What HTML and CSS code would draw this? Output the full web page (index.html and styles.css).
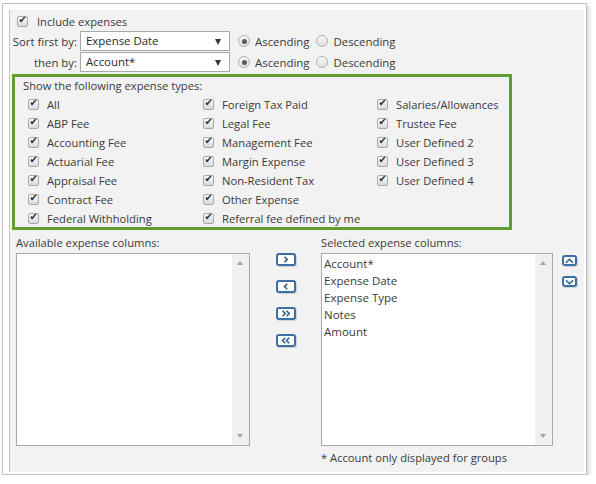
FILE: index.html
```html
<!doctype html>
<html>

<head>
  <title>Expense options</title>
  <link rel="stylesheet" href="styles.css">
</head>

<body>
  <div class="frame">
    <div class="panel">
      <label class="check include"><span class="cb"></span>Include expenses</label>

      <div class="sort-row">
        <span class="sort-label">Sort first by:</span>
        <div class="select">Expense Date<span class="arrow"></span></div>
        <label class="radio radio--on"><span class="dot"></span>Ascending</label>
        <label class="radio"><span class="dot"></span>Descending</label>
      </div>
      <div class="sort-row">
        <span class="sort-label">then by:</span>
        <div class="select">Account*<span class="arrow"></span></div>
        <label class="radio radio--on"><span class="dot"></span>Ascending</label>
        <label class="radio"><span class="dot"></span>Descending</label>
      </div>

      <section class="types">
        <h2>Show the following expense types:</h2>
        <div class="types-grid">
          <div class="col">
            <label class="check"><span class="cb"></span>All</label>
            <label class="check"><span class="cb"></span>ABP Fee</label>
            <label class="check"><span class="cb"></span>Accounting Fee</label>
            <label class="check"><span class="cb"></span>Actuarial Fee</label>
            <label class="check"><span class="cb"></span>Appraisal Fee</label>
            <label class="check"><span class="cb"></span>Contract Fee</label>
            <label class="check"><span class="cb"></span>Federal Withholding</label>
          </div>
          <div class="col">
            <label class="check"><span class="cb"></span>Foreign Tax Paid</label>
            <label class="check"><span class="cb"></span>Legal Fee</label>
            <label class="check"><span class="cb"></span>Management Fee</label>
            <label class="check"><span class="cb"></span>Margin Expense</label>
            <label class="check"><span class="cb"></span>Non-Resident Tax</label>
            <label class="check"><span class="cb"></span>Other Expense</label>
            <label class="check"><span class="cb"></span>Referral fee defined by me</label>
          </div>
          <div class="col">
            <label class="check"><span class="cb"></span>Salaries/Allowances</label>
            <label class="check"><span class="cb"></span>Trustee Fee</label>
            <label class="check"><span class="cb"></span>User Defined 2</label>
            <label class="check"><span class="cb"></span>User Defined 3</label>
            <label class="check"><span class="cb"></span>User Defined 4</label>
          </div>
        </div>
      </section>

      <section class="columns">
        <div class="list-block">
          <h3>Available expense columns:</h3>
          <div class="listbox">
            <ul class="items"></ul>
            <div class="scroll"><span class="up"></span><span class="down"></span></div>
          </div>
        </div>

        <div class="movers">
          <button class="btn"><svg width="8" height="7" viewBox="0 0 8 7"><path d="M2.5 0.8 L5.2 3.5 L2.5 6.2" /></svg></button>
          <button class="btn"><svg width="8" height="7" viewBox="0 0 8 7"><path d="M5.2 0.8 L2.5 3.5 L5.2 6.2" /></svg></button>
          <button class="btn"><svg width="10" height="7" viewBox="0 0 10 7"><path d="M1.5 0.8 L4.2 3.5 L1.5 6.2 M5.5 0.8 L8.2 3.5 L5.5 6.2" /></svg></button>
          <button class="btn"><svg width="10" height="7" viewBox="0 0 10 7"><path d="M4.2 0.8 L1.5 3.5 L4.2 6.2 M8.2 0.8 L5.5 3.5 L8.2 6.2" /></svg></button>
        </div>

        <div class="list-block">
          <h3>Selected expense columns:</h3>
          <div class="listbox">
            <ul class="items">
              <li>Account*</li>
              <li>Expense Date</li>
              <li>Expense Type</li>
              <li>Notes</li>
              <li>Amount</li>
            </ul>
            <div class="scroll"><span class="up"></span><span class="down"></span></div>
          </div>
          <p class="note">* Account only displayed for groups</p>
        </div>

        <div class="order">
          <button class="btn btn--sm"><svg width="9" height="6" viewBox="0 0 9 6"><path d="M1 4.8 L4.5 1.3 L8 4.8" /></svg></button>
          <button class="btn btn--sm"><svg width="9" height="6" viewBox="0 0 9 6"><path d="M1 1.2 L4.5 4.7 L8 1.2" /></svg></button>
        </div>
      </section>
    </div>
  </div>
</body>

</html>
```

FILE: styles.css
```css
* {
  box-sizing: border-box;
  margin: 0;
  padding: 0;
  font-size: inherit;
  font-family: inherit;
  font-weight: inherit;
  color: inherit;
}

html {
  font-family: "Open Sans", "Noto Sans", sans-serif;
  font-size: 11.2px;
  color: #3a3a3a;
  background: #fff;
  white-space: nowrap;
}

body {
  padding: 3px 0 0 2px;
}

ul {
  list-style: none;
}

/** Outer frame */
.frame {
  width: 585px;
  height: 472px;
  border: 1px solid #c2c2c2;
  background: #fff;
  padding: 6px 2px 2px 6px;
  box-shadow: 2px 3px 4px rgba(0, 0, 0, 0.18);
}

.panel {
  height: 100%;
  background: #f2f2f2;
  border-left: 1px solid #c4c4c4;
  padding: 2px 0 0 3px;
}

/** Checkboxes and radios */
.check {
  display: flex;
  align-items: center;
  height: 19px;
  gap: 8px;
}

.cb {
  position: relative;
  width: 11px;
  height: 11px;
  border: 1px solid #a9a9a9;
  border-radius: 2px;
  background: linear-gradient(#fbfbfb, #d9d9d9);
  flex: none;
}

.cb::after {
  content: "\2714";
  position: absolute;
  left: 0.5px;
  top: -3.5px;
  font-family: "DejaVu Sans", sans-serif;
  font-size: 10px;
  font-weight: bold;
  color: #2e2e2e;
}

.include {
  padding-left: 4px;
  gap: 9px;
}

.radio {
  display: flex;
  align-items: center;
  gap: 5px;
  margin-right: 7px;
}

.dot {
  position: relative;
  width: 12px;
  height: 12px;
  border-radius: 50%;
  border: 1px solid #b3b3b3;
  background: linear-gradient(#f7f7f7, #e1e1e1);
}

.radio--on .dot::after {
  content: "";
  position: absolute;
  left: 2.5px;
  top: 2.5px;
  width: 5px;
  height: 5px;
  border-radius: 50%;
  background: #5c5c5c;
}

/** Sort rows */
.sort-row {
  display: flex;
  align-items: center;
  height: 20px;
  margin-bottom: 1px;
  font-size: 11.4px;
}

.sort-label {
  display: flex;
  justify-content: flex-end;
  flex: none;
  width: 64px;
  min-width: 0;
  margin-right: 3px;
}

.select {
  position: relative;
  flex: none;
  width: 150px;
  height: 20px;
  line-height: 18px;
  border: 1px solid #a8a8a8;
  background: #fff;
  padding-left: 5px;
  margin-right: 8px;
  color: #2a2a2a;
}

.select .arrow {
  position: absolute;
  right: 8px;
  top: 7px;
  border-left: 3.5px solid transparent;
  border-right: 3.5px solid transparent;
  border-top: 6px solid #333;
}

/** Expense types box */
.types {
  margin: 2px 0 0 -1px;
  width: 500px;
  height: 156px;
  border: 3px solid #5f9f2f;
  padding: 0 0 0 8px;
}

.types h2 {
  height: 18px;
  line-height: 18px;
}

.types-grid {
  display: grid;
  grid-template-columns: 175px 174px auto;
  padding-left: 5px;
}

/** Column pickers */
.columns {
  display: flex;
  align-items: flex-start;
  margin-top: 3px;
  padding-left: 3px;
}

.list-block h3 {
  height: 20px;
  line-height: 20px;
}

.columns>.list-block:first-child .listbox {
  width: 234px;
}

.columns>.list-block:nth-child(3) .listbox {
  width: 232px;
}

.listbox {
  display: flex;
  height: 193px;
  border: 1px solid #a9a9a9;
  background: #fff;
}

.items {
  flex: 1;
  padding: 1px 0 0 2px;
  font-size: 11.5px;
}

.items li {
  height: 17px;
  line-height: 17px;
}

.scroll {
  position: relative;
  width: 17px;
  background: #f0f0f0;
}

.scroll .up,
.scroll .down {
  position: absolute;
  left: 5px;
  border-left: 3.5px solid transparent;
  border-right: 3.5px solid transparent;
}

.scroll .up {
  top: 7px;
  border-bottom: 4px solid #a3a3a3;
}

.scroll .down {
  bottom: 7px;
  border-top: 4px solid #a3a3a3;
}

.note {
  margin-top: 4px;
}

.movers {
  display: flex;
  flex-direction: column;
  gap: 14px;
  margin: 20px 25px 0 26px;
}

.order {
  display: flex;
  flex-direction: column;
  gap: 10px;
  margin: 22px 0 0 9px;
}

.btn {
  display: flex;
  align-items: center;
  justify-content: center;
  width: 20px;
  height: 13px;
  border: 2px solid #3b6fa6;
  border-radius: 3px;
  background: #fff;
  box-shadow: 1px 1px 1px rgba(0, 0, 0, 0.15);
}

.btn--sm {
  width: 15px;
  height: 11px;
}

.btn svg path {
  fill: none;
  stroke: #2f5f92;
  stroke-width: 1.6;
}
```
